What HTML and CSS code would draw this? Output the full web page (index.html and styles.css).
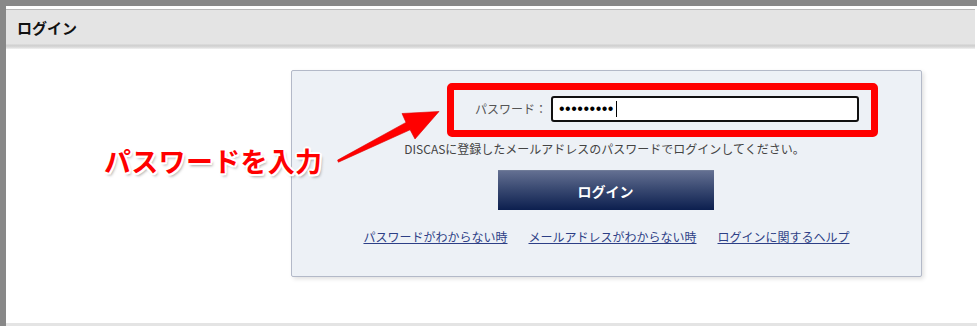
FILE: index.html
```html
<!DOCTYPE html>
<html lang="ja">
<head>
<meta charset="utf-8">
<title>ログイン</title>
<link rel="stylesheet" href="styles.css">
</head>
<body>
<div class="frame">
  <div class="header"><h1 class="title">ログイン</h1></div>
  <div class="content">
    <div class="card">
      <div class="row">
        <label class="label">パスワード：</label>
        <div class="field"><span class="dots">•••••••••</span><span class="caret"></span></div>
      </div>
      <p class="desc">DISCASに登録したメールアドレスのパスワードでログインしてください。</p>
      <div class="btn-wrap"><button class="btn">ログイン</button></div>
      <div class="links">
        <a href="#">パスワードがわからない時</a>
        <a href="#">メールアドレスがわからない時</a>
        <a href="#">ログインに関するヘルプ</a>
      </div>
      <div class="highlight"></div>
    </div>
  </div>
  <div class="bottom"></div>
</div>
<div class="note">パスワードを入力</div>
<svg class="arrow" width="977" height="326" viewBox="0 0 977 326">
  <polygon points="337.6,160.1 406,122.4 402,113.5 439,111.5 415,139 410.1,129.8 338.4,162.2" fill="#f00" stroke="#d00" stroke-width="0.6" stroke-linejoin="round"/>
</svg>
</body>
</html>
```
FILE: styles.css
```css
* { box-sizing: border-box; }
html, body { margin: 0; padding: 0; background: #fff; }
body {
  width: 977px;
  height: 326px;
  overflow: hidden;
  position: relative;
  font-family: "Noto Sans CJK JP", "Noto Sans", sans-serif;
}
.frame {
  border-top: 6px solid #888;
  border-left: 6px solid #888;
  height: 326px;
  display: flex;
  flex-direction: column;
}
.header {
  margin-top: 3px;
  margin-right: 2px;
  height: 40px;
  border-top: 1px solid #b9b9b9;
  background: linear-gradient(to bottom, #e4e4e4 0, #e4e4e4 34px, #cfcfcf 35px, #d8d8d8 37px, #f2f2f2 39px, #fff 40px);
  display: flex;
  align-items: flex-start;
  padding: 8px 0 0 11px;
}
.title {
  margin: 0;
  font-size: 15px;
  line-height: 20px;
  font-weight: bold;
  color: #111;
}
.content {
  height: 274px;
  padding: 21px 0 0 285px;
}
.card {
  position: relative;
  width: 631px;
  height: 207px;
  background: #edf1f6;
  border: 1px solid #b3b9c8;
  border-radius: 2px;
  box-shadow: 2px 2px 4px rgba(0,0,0,0.12);
  padding-top: 25px;
}
.row {
  display: flex;
  align-items: center;
  padding-left: 183px;
  gap: 4px;
}
.label {
  font-size: 12px;
  color: #555;
  line-height: 26px;
}
.field {
  width: 308px;
  height: 26px;
  border: 2px solid #111;
  border-radius: 3px;
  background: #fff;
  display: flex;
  align-items: center;
  padding-left: 6px;
}
.dots {
  font-family: "Liberation Sans", sans-serif;
  font-size: 16px;
  letter-spacing: 0.5px;
  color: #000;
  line-height: 16px;
}
.caret {
  display: inline-block;
  width: 1px;
  height: 16px;
  background: #000;
  margin-left: 2px;
}
.desc {
  margin: 18px 0 0;
  text-align: center;
  font-size: 12px;
  line-height: 18px;
  color: #444;
  padding-right: 4px;
}
.btn-wrap {
  display: flex;
  justify-content: center;
  margin-top: 12px;
  padding-right: 2px;
}
.btn {
  width: 216px;
  height: 40px;
  border: 0;
  border-top: 1px solid #6f7b98;
  border-radius: 0;
  background: linear-gradient(to bottom, #636f91 0%, #3a4a72 45%, #0c1f4f 100%);
  color: #fff;
  font-family: "Noto Sans CJK JP", sans-serif;
  font-size: 14px;
  font-weight: bold;
  padding: 0;
}
.links {
  display: flex;
  justify-content: center;
  gap: 21px;
  margin-top: 18px;
}
.links a {
  font-size: 12px;
  line-height: 18px;
  color: #2d3f86;
  text-decoration: underline;
}
.highlight {
  position: absolute;
  left: 155px;
  top: 12px;
  width: 431px;
  height: 54px;
  border: 7px solid #f00;
  border-radius: 5px;
}
.bottom {
  height: 3px;
  background: #e4e4e4;
}
.note {
  position: absolute;
  left: 104px;
  top: 143px;
  font-size: 27px;
  line-height: 36px;
  font-weight: bold;
  letter-spacing: 0.3px;
  color: #f00;
  text-shadow:
    2px 0 0 #fff, -2px 0 0 #fff, 0 2px 0 #fff, 0 -2px 0 #fff,
    1.5px 1.5px 0 #fff, -1.5px 1.5px 0 #fff, 1.5px -1.5px 0 #fff, -1.5px -1.5px 0 #fff,
    2px 3px 3px rgba(0,0,0,0.35);
}
.arrow {
  position: absolute;
  left: 0;
  top: 0;
  pointer-events: none;
}
```
